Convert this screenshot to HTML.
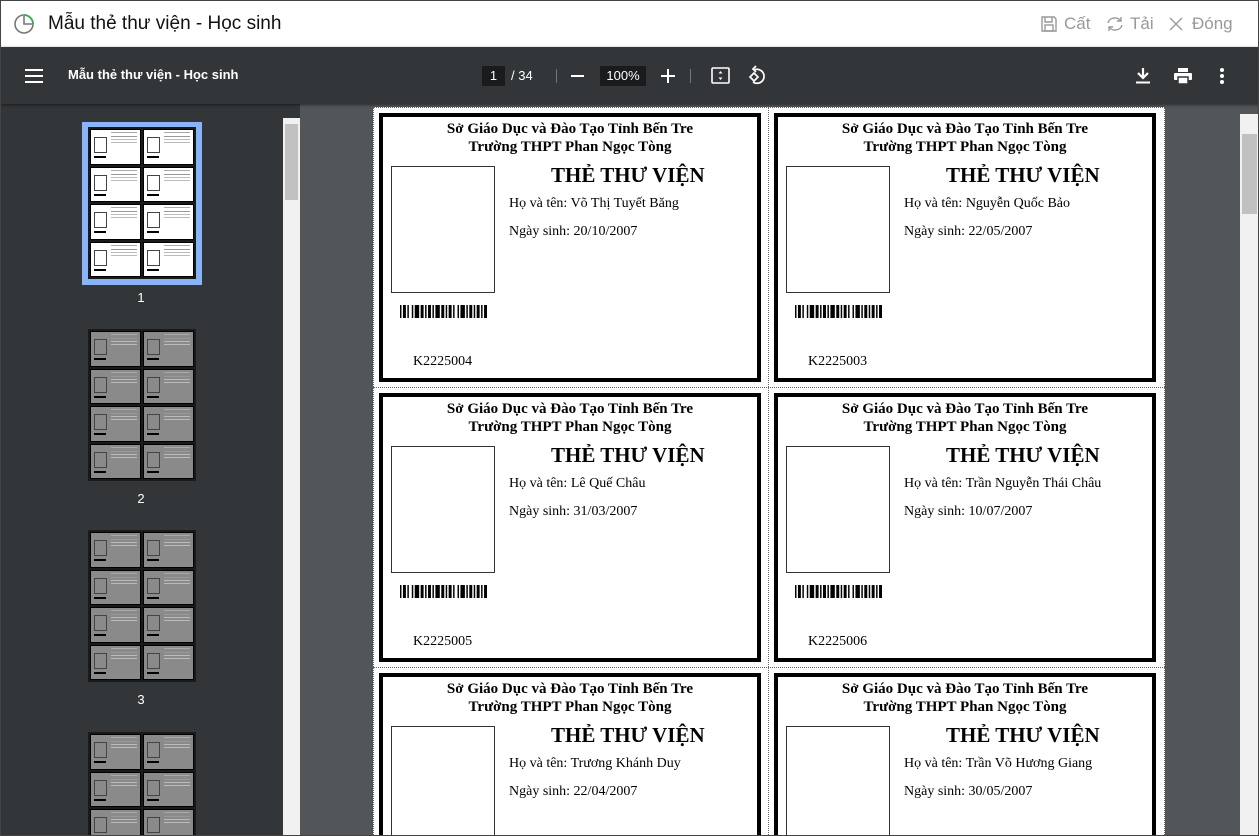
<!DOCTYPE html>
<html><head><meta charset="utf-8"><style>
*{margin:0;padding:0;box-sizing:border-box}
html,body{width:1259px;height:836px;overflow:hidden}
body{background:#fff;font-family:"Liberation Sans",sans-serif;position:relative}
#wrap{position:absolute;left:0;top:0;width:1259px;height:836px;overflow:hidden}
.abs{position:absolute}
#title{left:0;top:0;width:1259px;height:47px;background:#fff}
#tb{left:0;top:47px;width:1259px;height:57px;background:#323639;box-shadow:0 1px 3px rgba(0,0,0,.5);z-index:3}
#side{left:0;top:104px;width:300px;height:732px;background:#323639;overflow:hidden}
#main{left:300px;top:104px;width:959px;height:732px;background:#525659;overflow:hidden}
.w{color:#fff}
.card{position:absolute;width:382px;height:269px;border:4px solid #000;background:#fff;font-family:"Liberation Serif",serif;color:#000}
.card .h{position:absolute;left:0;width:100%;text-align:center;font-weight:bold;font-size:15px}
.card .ph{position:absolute;left:8px;top:49px;width:104px;height:127px;border:1px solid #333}
.card .t{position:absolute;left:168px;top:46px;font-weight:bold;font-size:21px}
.card .f{position:absolute;left:126px;font-size:14px}
.card .bc{position:absolute;left:17px;top:188px}
.card .k{position:absolute;left:30px;top:237px;font-size:14px}
.mp{position:absolute;display:grid;grid-template-columns:1fr 1fr;gap:2px;padding:2px;background:#1a1a1a}
.mc{border:1px solid #000;background:#fff;position:relative;font-size:0}
.mc i{position:absolute;left:3px;top:7px;width:13px;height:16px;border:1px solid #444}
.mc b{position:absolute;left:3px;top:26px;width:12px;height:2px;background:#000}
.mc s{position:absolute;left:20px;top:6px;width:26px;height:1px;background:#999;box-shadow:0 -4px #aaa,0 3px #bbb,0 6px #bbb}
.g .mc{background:#8a8a8a}
.lbl{position:absolute;width:20px;text-align:center;color:#fff;font-size:13px}
#frame{position:absolute;left:0;top:0;width:1259px;height:836px;border:1px solid #444;z-index:10;pointer-events:none}
</style></head><body><div id="wrap">
<div id="title" class="abs">
 <svg class="abs" style="left:13px;top:13px" width="22" height="22" viewBox="0 0 22 22"><circle cx="11" cy="11" r="9" fill="none" stroke="#777" stroke-width="1.6"/><path d="M11 2A9 9 0 0 1 20 11" fill="none" stroke="#2bb24c" stroke-width="1.8"/><path d="M11 3V11H19" fill="none" stroke="#777" stroke-width="1.6"/></svg>
 <div class="abs" style="left:48px;top:13px;font-size:19px;color:#111">Mẫu thẻ thư viện - Học sinh</div>
 <svg class="abs" style="left:1040px;top:15px" width="18" height="18" viewBox="0 0 18 18" fill="none" stroke="#999" stroke-width="1.4"><path d="M2 2H14L16 4V16H2Z"/><path d="M5 2V7H12V2"/><rect x="5" y="10" width="8" height="6"/></svg>
 <div class="abs" style="left:1064px;top:14px;font-size:17px;color:#999">Cất</div>
 <svg class="abs" style="left:1105px;top:15px" width="20" height="18" viewBox="0 0 20 18" fill="none" stroke="#999" stroke-width="1.4"><path d="M3 8A7 6 0 0 1 16 6M17 10A7 6 0 0 1 4 12"/><path d="M16 2V6H12M4 16V12H8"/></svg>
 <div class="abs" style="left:1130px;top:14px;font-size:17px;color:#999">Tải</div>
 <svg class="abs" style="left:1169px;top:17px" width="14" height="14" viewBox="0 0 14 14" stroke="#999" stroke-width="1.4"><path d="M1 1L13 13M13 1L1 13"/></svg>
 <div class="abs" style="left:1192px;top:14px;font-size:17px;color:#999">Đóng</div>
</div>
<div id="tb" class="abs">
 <svg class="abs" style="left:25px;top:22px" width="18" height="14"><path d="M0 1H18M0 7H18M0 13H18" stroke="#fff" stroke-width="2"/></svg>
 <div class="abs w" style="left:68px;top:20px;font-size:13px;font-weight:bold">Mẫu thẻ thư viện - Học sinh</div>
 <div class="abs" style="left:482px;top:19px;width:23px;height:20px;background:#191b1c;color:#fff;font-size:13px;text-align:center;line-height:20px">1</div>
 <div class="abs w" style="left:511px;top:21px;font-size:13px">/ 34</div>
 <div class="abs" style="left:556px;top:22px;width:1px;height:14px;background:#777"></div>
 <div class="abs" style="left:571px;top:28px;width:13px;height:2px;background:#fff"></div>
 <div class="abs" style="left:600px;top:19px;width:46px;height:20px;background:#191b1c;color:#fff;font-size:13px;text-align:center;line-height:20px">100%</div>
 <svg class="abs" style="left:661px;top:22px" width="14" height="14"><path d="M0 7H14M7 0V14" stroke="#fff" stroke-width="2"/></svg>
 <div class="abs" style="left:690px;top:22px;width:1px;height:14px;background:#777"></div>
 <svg class="abs" style="left:711px;top:20px" width="19" height="17" viewBox="0 0 19 17" fill="none" stroke="#fff" stroke-width="1.6"><rect x="1" y="1" width="17" height="15" rx="1"/><path d="M9.5 4L7.5 6.5H11.5ZM9.5 13L7.5 10.5H11.5Z" fill="#fff" stroke="none"/></svg>
 <svg class="abs" style="left:747px;top:18px" width="20" height="20" viewBox="0 0 20 20" fill="none" stroke="#fff" stroke-width="1.7"><path d="M7 5A7 7 0 1 1 6 17"/><path d="M9 1L6 4L9 7"/><path d="M7 8L11 12L7 16L3 12Z"/></svg>
 <svg class="abs" style="left:1136px;top:21px" width="14" height="16"><path d="M7 0V9M2 5L7 10L12 5" stroke="#fff" stroke-width="2.2" fill="none"/><path d="M0 14.5H14" stroke="#fff" stroke-width="2"/></svg>
 <svg class="abs" style="left:1174px;top:21px" width="18" height="16"><rect x="4" y="0" width="10" height="4" fill="#fff"/><rect x="0" y="5" width="18" height="7" rx="1" fill="#fff"/><rect x="4" y="9" width="10" height="7" fill="#fff" stroke="#323639" stroke-width="1.5"/></svg>
 <svg class="abs" style="left:1220px;top:21px" width="4" height="16"><circle cx="2" cy="2" r="2" fill="#fff"/><circle cx="2" cy="8" r="2" fill="#fff"/><circle cx="2" cy="14" r="2" fill="#fff"/></svg>
</div>
<div id="side" class="abs">
 <div class="abs" style="left:283px;top:14px;width:17px;height:718px;background:#f1f1f1"></div>
 <div class="abs" style="left:285px;top:20px;width:13px;height:76px;background:#c1c1c1"></div>
 <div class="abs" style="left:82px;top:18px;width:120px;height:163px;background:#8ab4f8"></div>
 <div id="thumbs"></div>
</div>
<div id="main" class="abs">
 <div class="abs" style="left:940px;top:10px;width:19px;height:722px;background:#f1f1f1"></div>
 <div class="abs" style="left:942px;top:30px;width:15px;height:80px;background:#c1c1c1"></div>
 <div class="abs" style="left:73px;top:3px;width:792px;height:740px;background:#fff;border:1px dotted #666"></div>
 <div class="abs" style="left:468px;top:3px;width:0;height:740px;border-left:1px dotted #666"></div>
 <div class="abs" style="left:73px;top:283px;width:792px;height:0;border-top:1px dotted #666"></div>
 <div class="abs" style="left:73px;top:563px;width:792px;height:0;border-top:1px dotted #666"></div>
 <div id="cards"></div>
</div>
</div>
<div id="frame"></div>
<script>
var data=[["Võ Thị Tuyết Băng","20/10/2007","K2225004"],["Nguyễn Quốc Bảo","22/05/2007","K2225003"],["Lê Quế Châu","31/03/2007","K2225005"],["Trần Nguyễn Thái Châu","10/07/2007","K2225006"],["Trương Khánh Duy","22/04/2007",""],["Trần Võ Hương Giang","30/05/2007",""]];
var bars="";var x=0;var w=[1,1,2,1,1,2,1,1,3,1,2,1,1,1,2,1,1,1,3,1,2,1,1,1,2,1,1,2,1,1,3,1,1,1,2,1,1,1,2,1,1,1,2];
for(var i=0;i<w.length;i++){if(i%2==0)bars+='<rect x="'+x+'" y="0" width="'+w[i]+'" height="13"/>';x+=w[i];}
var h="";
data.forEach(function(d,i){var l=79+(i%2)*395,t=9+Math.floor(i/2)*280;
h+='<div class="card" style="left:'+l+'px;top:'+t+'px"><div class="h" style="top:4px">Sở Giáo Dục và Đào Tạo Tỉnh Bến Tre</div><div class="h" style="top:22px">Trường THPT Phan Ngọc Tòng</div><div class="ph"></div><div class="t">THẺ THƯ VIỆN</div><div class="f" style="top:79px">Họ và tên: '+d[0]+'</div><div class="f" style="top:107px">Ngày sinh: '+d[1]+'</div><svg class="bc" width="87" height="13" viewBox="0 0 '+x+' 13" preserveAspectRatio="none">'+bars+'</svg><div class="k">'+d[2]+'</div></div>';});
document.getElementById('cards').innerHTML=h;
function mp(l,t,g){var s='<div class="mp'+(g?' g':'')+'" style="left:'+l+'px;top:'+t+'px;width:108px;height:152px;grid-template-rows:repeat(4,1fr)">';for(var i=0;i<8;i++)s+='<div class="mc"><i></i><b></b><s></s></div>';return s+'</div>';}
var th=mp(88,23,0)+mp(88,225,1)+mp(88,426,1)+mp(88,628,1);
th+='<div class="lbl" style="left:131px;top:186px">1</div><div class="lbl" style="left:131px;top:387px">2</div><div class="lbl" style="left:131px;top:588px">3</div>';
document.getElementById('thumbs').innerHTML=th;
</script>
</body></html>
